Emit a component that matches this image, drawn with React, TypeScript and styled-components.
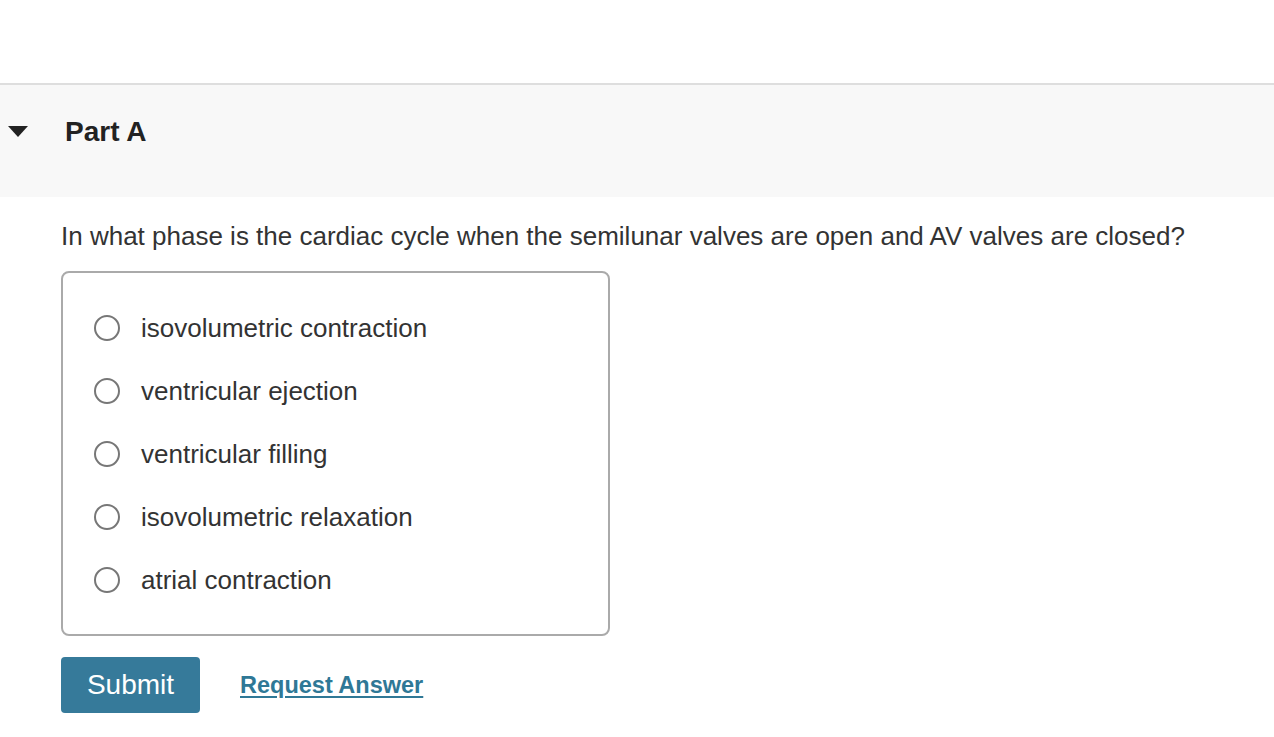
import React, { useState } from 'react';
import styled, { createGlobalStyle } from 'styled-components';

const GlobalStyle = createGlobalStyle`
    html, body {
        margin: 0;
        padding: 0;
        background: #fff;
        font-family: 'Liberation Sans', Arial, sans-serif;
        color: #333;
    }
`;

const Page = styled.div`
    width: 1274px;
    min-height: 737px;
    padding-top: 83px;
    box-sizing: border-box;
`;

const PartHeader = styled.div`
    display: flex;
    align-items: center;
    height: 114px;
    box-sizing: border-box;
    padding-bottom: 18px;
    background-color: #f8f8f8;
    border-top: 2px solid #dedede;
`;

const Caret = styled.div`
    width: 0;
    height: 0;
    margin-left: 8px;
    margin-bottom: 2px;
    border-left: 10px solid transparent;
    border-right: 10px solid transparent;
    border-top: 11px solid #222;
`;

const PartTitle = styled.h2`
    margin: 0 0 0 37px;
    font-size: 28px;
    font-weight: 700;
    color: #222;
`;

const Body = styled.div`
    padding: 24px 61px 0 61px;
`;

const Question = styled.p`
    margin: 0;
    font-size: 26px;
    line-height: 30px;
    color: #333;
`;

const ChoiceBox = styled.div`
    margin-top: 20px;
    width: 549px;
    height: 365px;
    box-sizing: border-box;
    border: 2px solid #aaa;
    border-radius: 8px;
    padding: 40px 0 0 31px;
    display: flex;
    flex-direction: column;
    gap: 33px;
`;

const Choice = styled.label`
    display: flex;
    align-items: center;
    height: 30px;
    font-size: 26px;
    color: #333;
    cursor: pointer;
`;

const Radio = styled.span<{ $checked: boolean }>`
    width: 26px;
    height: 26px;
    box-sizing: border-box;
    border: 2px solid #777;
    border-radius: 50%;
    margin-right: 21px;
    display: flex;
    align-items: center;
    justify-content: center;

    &::after {
        content: '';
        width: 12px;
        height: 12px;
        border-radius: 50%;
        background: #367a9b;
        display: ${({ $checked }) => ($checked ? 'block' : 'none')};
    }
`;

const Actions = styled.div`
    display: flex;
    align-items: center;
    margin-top: 21px;
    gap: 40px;
`;

const SubmitButton = styled.button`
    width: 139px;
    height: 56px;
    border: none;
    border-radius: 4px;
    background-color: #367a9a;
    color: #fff;
    font-family: 'Liberation Sans', Arial, sans-serif;
    font-size: 28px;
    cursor: pointer;
`;

const RequestLink = styled.a`
    font-size: 23.5px;
    font-weight: 700;
    color: #2f7896;
    text-decoration: underline;
    text-underline-offset: 3px;
    cursor: pointer;
`;

const CHOICES = [
    'isovolumetric contraction',
    'ventricular ejection',
    'ventricular filling',
    'isovolumetric relaxation',
    'atrial contraction',
];

function App() {
    const [selected, setSelected] = useState<number | null>(null);

    return (
        <Page>
            <GlobalStyle />
            <PartHeader>
                <Caret />
                <PartTitle>Part A</PartTitle>
            </PartHeader>
            <Body>
                <Question>
                    In what phase is the cardiac cycle when the semilunar valves are open and AV valves are closed?
                </Question>
                <ChoiceBox>
                    {CHOICES.map((choice, i) => (
                        <Choice key={choice} onClick={() => setSelected(i)}>
                            <Radio $checked={selected === i} />
                            {choice}
                        </Choice>
                    ))}
                </ChoiceBox>
                <Actions>
                    <SubmitButton>Submit</SubmitButton>
                    <RequestLink>Request Answer</RequestLink>
                </Actions>
            </Body>
        </Page>
    );
}

export default App;
